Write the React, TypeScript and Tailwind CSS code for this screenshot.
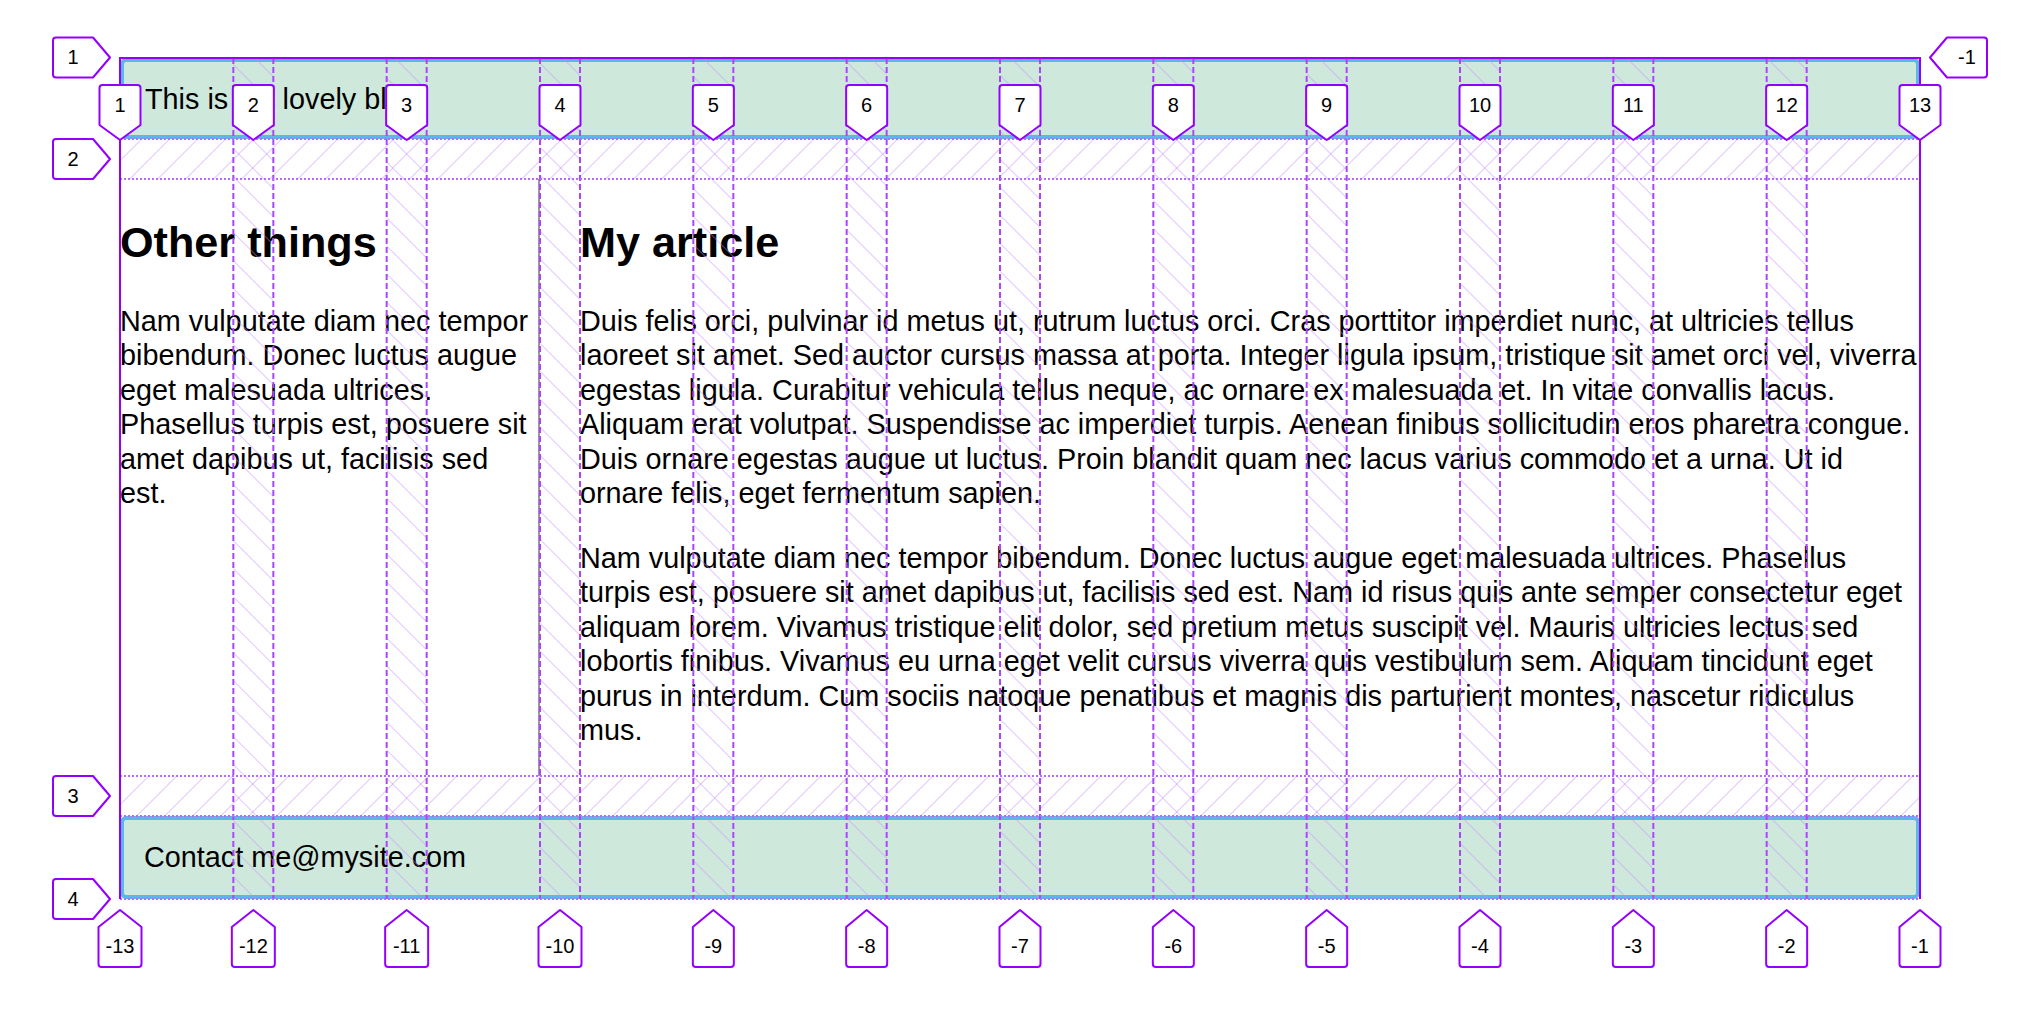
import React from "react";

const GRID_LEFT = 120;
const GRID_RIGHT = 1920;
const GAP = 40;
const COL_W = (1800 - 11 * GAP) / 12;
const TOP = 58;
const R1E = 139;
const R2S = 179;
const R2E = 776;
const R3S = 816;
const BOTTOM = 899;

const trackStart = (i: number) => GRID_LEFT + i * (COL_W + GAP);
const trackEnd = (i: number) => trackStart(i) + COL_W;

const para1 = [
  "Duis felis orci, pulvinar id metus ut, rutrum luctus orci. Cras porttitor imperdiet nunc, at ultricies tellus",
  "laoreet sit amet. Sed auctor cursus massa at porta. Integer ligula ipsum, tristique sit amet orci vel, viverra",
  "egestas ligula. Curabitur vehicula tellus neque, ac ornare ex malesuada et. In vitae convallis lacus.",
  "Aliquam erat volutpat. Suspendisse ac imperdiet turpis. Aenean finibus sollicitudin eros pharetra congue.",
  "Duis ornare egestas augue ut luctus. Proin blandit quam nec lacus varius commodo et a urna. Ut id",
  "ornare felis, eget fermentum sapien.",
];
const para2 = [
  "Nam vulputate diam nec tempor bibendum. Donec luctus augue eget malesuada ultrices. Phasellus",
  "turpis est, posuere sit amet dapibus ut, facilisis sed est. Nam id risus quis ante semper consectetur eget",
  "aliquam lorem. Vivamus tristique elit dolor, sed pretium metus suscipit vel. Mauris ultricies lectus sed",
  "lobortis finibus. Vivamus eu urna eget velit cursus viverra quis vestibulum sem. Aliquam tincidunt eget",
  "purus in interdum. Cum sociis natoque penatibus et magnis dis parturient montes, nascetur ridiculus",
  "mus.",
];
const asideLines = [
  "Nam vulputate diam nec tempor",
  "bibendum. Donec luctus augue",
  "eget malesuada ultrices.",
  "Phasellus turpis est, posuere sit",
  "amet dapibus ut, facilisis sed",
  "est.",
];

function Lines({ lines }: { lines: string[] }) {
  return (
    <>
      {lines.map((l, i) => (
        <React.Fragment key={i}>
          {l}
          {i < lines.length - 1 && <br />}
        </React.Fragment>
      ))}
    </>
  );
}

const R = 3;

function downLabel(c: number, hw: number) {
  const t = 85, b = 125, tip = 140;
  return `M ${c - hw} ${b} L ${c - hw} ${t + R} Q ${c - hw} ${t} ${c - hw + R} ${t} L ${c + hw - R} ${t} Q ${c + hw} ${t} ${c + hw} ${t + R} L ${c + hw} ${b} L ${c} ${tip} Z`;
}
function upLabel(c: number, hw: number) {
  const tip = 910, s = 927, b = 967;
  return `M ${c} ${tip} L ${c + hw} ${s} L ${c + hw} ${b - R} Q ${c + hw} ${b} ${c + hw - R} ${b} L ${c - hw + R} ${b} Q ${c - hw} ${b} ${c - hw} ${b - R} L ${c - hw} ${s} Z`;
}
function rightLabel(yc: number) {
  const l = 53, s = 93, tip = 110;
  return `M ${l + R} ${yc - 20} L ${s} ${yc - 20} L ${tip} ${yc} L ${s} ${yc + 20} L ${l + R} ${yc + 20} Q ${l} ${yc + 20} ${l} ${yc + 20 - R} L ${l} ${yc - 20 + R} Q ${l} ${yc - 20} ${l + R} ${yc - 20} Z`;
}
function leftLabel(yc: number) {
  const tip = 1930, s = 1947, r = 1987;
  return `M ${tip} ${yc} L ${s} ${yc - 20} L ${r - R} ${yc - 20} Q ${r} ${yc - 20} ${r} ${yc - 20 + R} L ${r} ${yc + 20 - R} Q ${r} ${yc + 20} ${r - R} ${yc + 20} L ${s} ${yc + 20} Z`;
}

function Overlay() {
  const solid = "#9400ff";
  const dashed = "#ab46ff";
  const dotted = "#b86cff";
  const hatch = "#c28cff";
  const colLineCenters: number[] = [GRID_LEFT];
  for (let i = 0; i < 11; i++) colLineCenters.push(trackEnd(i) + GAP / 2);
  colLineCenters.push(GRID_RIGHT);

  const vLines: number[] = [];
  for (let i = 0; i < 11; i++) {
    vLines.push(trackEnd(i));
    vLines.push(trackStart(i + 1));
  }

  const rowLabels: [string, number][] = [
    ["1", 57.5],
    ["2", (R1E + R2S) / 2],
    ["3", (R2E + R3S) / 2],
    ["4", BOTTOM],
  ];

  return (
    <svg
      className="absolute left-0 top-0 pointer-events-none"
      width={2028}
      height={1026}
      viewBox="0 0 2028 1026"
    >
      <defs>
        <pattern id="hatchRow" patternUnits="userSpaceOnUse" width="19.8" height="19.8" patternTransform="rotate(45)">
          <line x1="0" y1="0" x2="0" y2="19.8" stroke={hatch} strokeWidth="1" />
        </pattern>
        <pattern id="hatchCol" patternUnits="userSpaceOnUse" width="19.8" height="19.8" patternTransform="rotate(-45)">
          <line x1="0" y1="0" x2="0" y2="19.8" stroke={hatch} strokeWidth="1" />
        </pattern>
      </defs>

      {/* gap hatching */}
      {Array.from({ length: 11 }, (_, i) => (
        <rect key={`cg${i}`} x={trackEnd(i)} y={TOP} width={GAP} height={BOTTOM - TOP} fill="url(#hatchCol)" />
      ))}
      <rect x={GRID_LEFT} y={R1E} width={GRID_RIGHT - GRID_LEFT} height={GAP} fill="url(#hatchRow)" />
      <rect x={GRID_LEFT} y={R2E} width={GRID_RIGHT - GRID_LEFT} height={GAP} fill="url(#hatchRow)" />

      {/* track lines */}
      {vLines.map((x, i) => (
        <line key={`v${i}`} x1={x} y1={TOP} x2={x} y2={BOTTOM} stroke={dashed} strokeWidth="2" strokeDasharray="6 3" />
      ))}
      {[R1E, R2S, R2E, R3S, BOTTOM].map((y, i) => (
        <line key={`h${i}`} x1={GRID_LEFT} y1={y} x2={GRID_RIGHT} y2={y} stroke={dotted} strokeWidth="2" strokeDasharray="2 2" />
      ))}

      {/* outer edges */}
      <line x1={GRID_LEFT - 1} y1={TOP} x2={GRID_RIGHT + 1} y2={TOP} stroke={solid} strokeWidth="2" />
      <line x1={GRID_LEFT} y1={TOP - 1} x2={GRID_LEFT} y2={BOTTOM} stroke={solid} strokeWidth="2" />
      <line x1={GRID_RIGHT} y1={TOP - 1} x2={GRID_RIGHT} y2={BOTTOM} stroke={solid} strokeWidth="2" />

      {/* labels */}
      <g className="font-['Liberation_Sans',Arial,sans-serif] text-[20px]">
        {colLineCenters.map((c, i) => {
          const t = String(i + 1);
          return (
            <g key={`ct${i}`}>
              <path d={downLabel(c, 20.5)} fill="#fff" stroke={solid} strokeWidth="2" strokeLinejoin="round" />
              <text x={c} y={111.5} textAnchor="middle" fill="#000">{t}</text>
            </g>
          );
        })}
        {colLineCenters.map((c, i) => {
          const t = String(-(13 - i));
          const hw = t.length >= 3 ? 21.5 : 20.5;
          return (
            <g key={`cb${i}`}>
              <path d={upLabel(c, hw)} fill="#fff" stroke={solid} strokeWidth="2" strokeLinejoin="round" />
              <text x={c} y={953} textAnchor="middle" fill="#000">{t}</text>
            </g>
          );
        })}
        {rowLabels.map(([t, yc]) => (
          <g key={`r${t}`}>
            <path d={rightLabel(yc)} fill="#fff" stroke={solid} strokeWidth="2" strokeLinejoin="round" />
            <text x={73} y={yc + 6.5} textAnchor="middle" fill="#000">{t}</text>
          </g>
        ))}
        <g>
          <path d={leftLabel(57.5)} fill="#fff" stroke={solid} strokeWidth="2" strokeLinejoin="round" />
          <text x={1967} y={64} textAnchor="middle" fill="#000">-1</text>
        </g>
      </g>
    </svg>
  );
}

export default function App() {
  return (
    <div className="relative w-[2028px] h-[1026px] overflow-hidden bg-white text-black font-['Liberation_Sans',Arial,sans-serif] text-[28.8px] leading-[34.5px]">
      <div className="ml-[120px] pt-[58px] w-[1800px] grid grid-cols-12 gap-x-[40px] gap-y-[40px] grid-rows-[81px_597px_83px]">
        <header className="col-span-12 flex items-center rounded-[6px] border-4 border-[#58b9e6] bg-[#cfe8dc] px-[21px] pt-[2px]">
          This is my lovely blog
        </header>
        <aside className="col-span-3 border-r-2 border-[#9a9a9a]">
          <h2 className="mt-[38px] mb-[36.5px] text-[43.2px] font-bold leading-[50px]">Other things</h2>
          <p className="m-0 whitespace-nowrap">
            <Lines lines={asideLines} />
          </p>
        </aside>
        <article className="col-span-9">
          <h2 className="mt-[38px] mb-[36.5px] text-[43.2px] font-bold leading-[50px]">My article</h2>
          <p className="mt-0 mb-[30px] whitespace-nowrap">
            <Lines lines={para1} />
          </p>
          <p className="m-0 whitespace-nowrap">
            <Lines lines={para2} />
          </p>
        </article>
        <footer className="col-span-12 flex items-center rounded-[6px] border-4 border-[#58b9e6] bg-[#cfe8dc] px-[20px]">
          Contact me@mysite.com
        </footer>
      </div>
      <Overlay />
    </div>
  );
}
